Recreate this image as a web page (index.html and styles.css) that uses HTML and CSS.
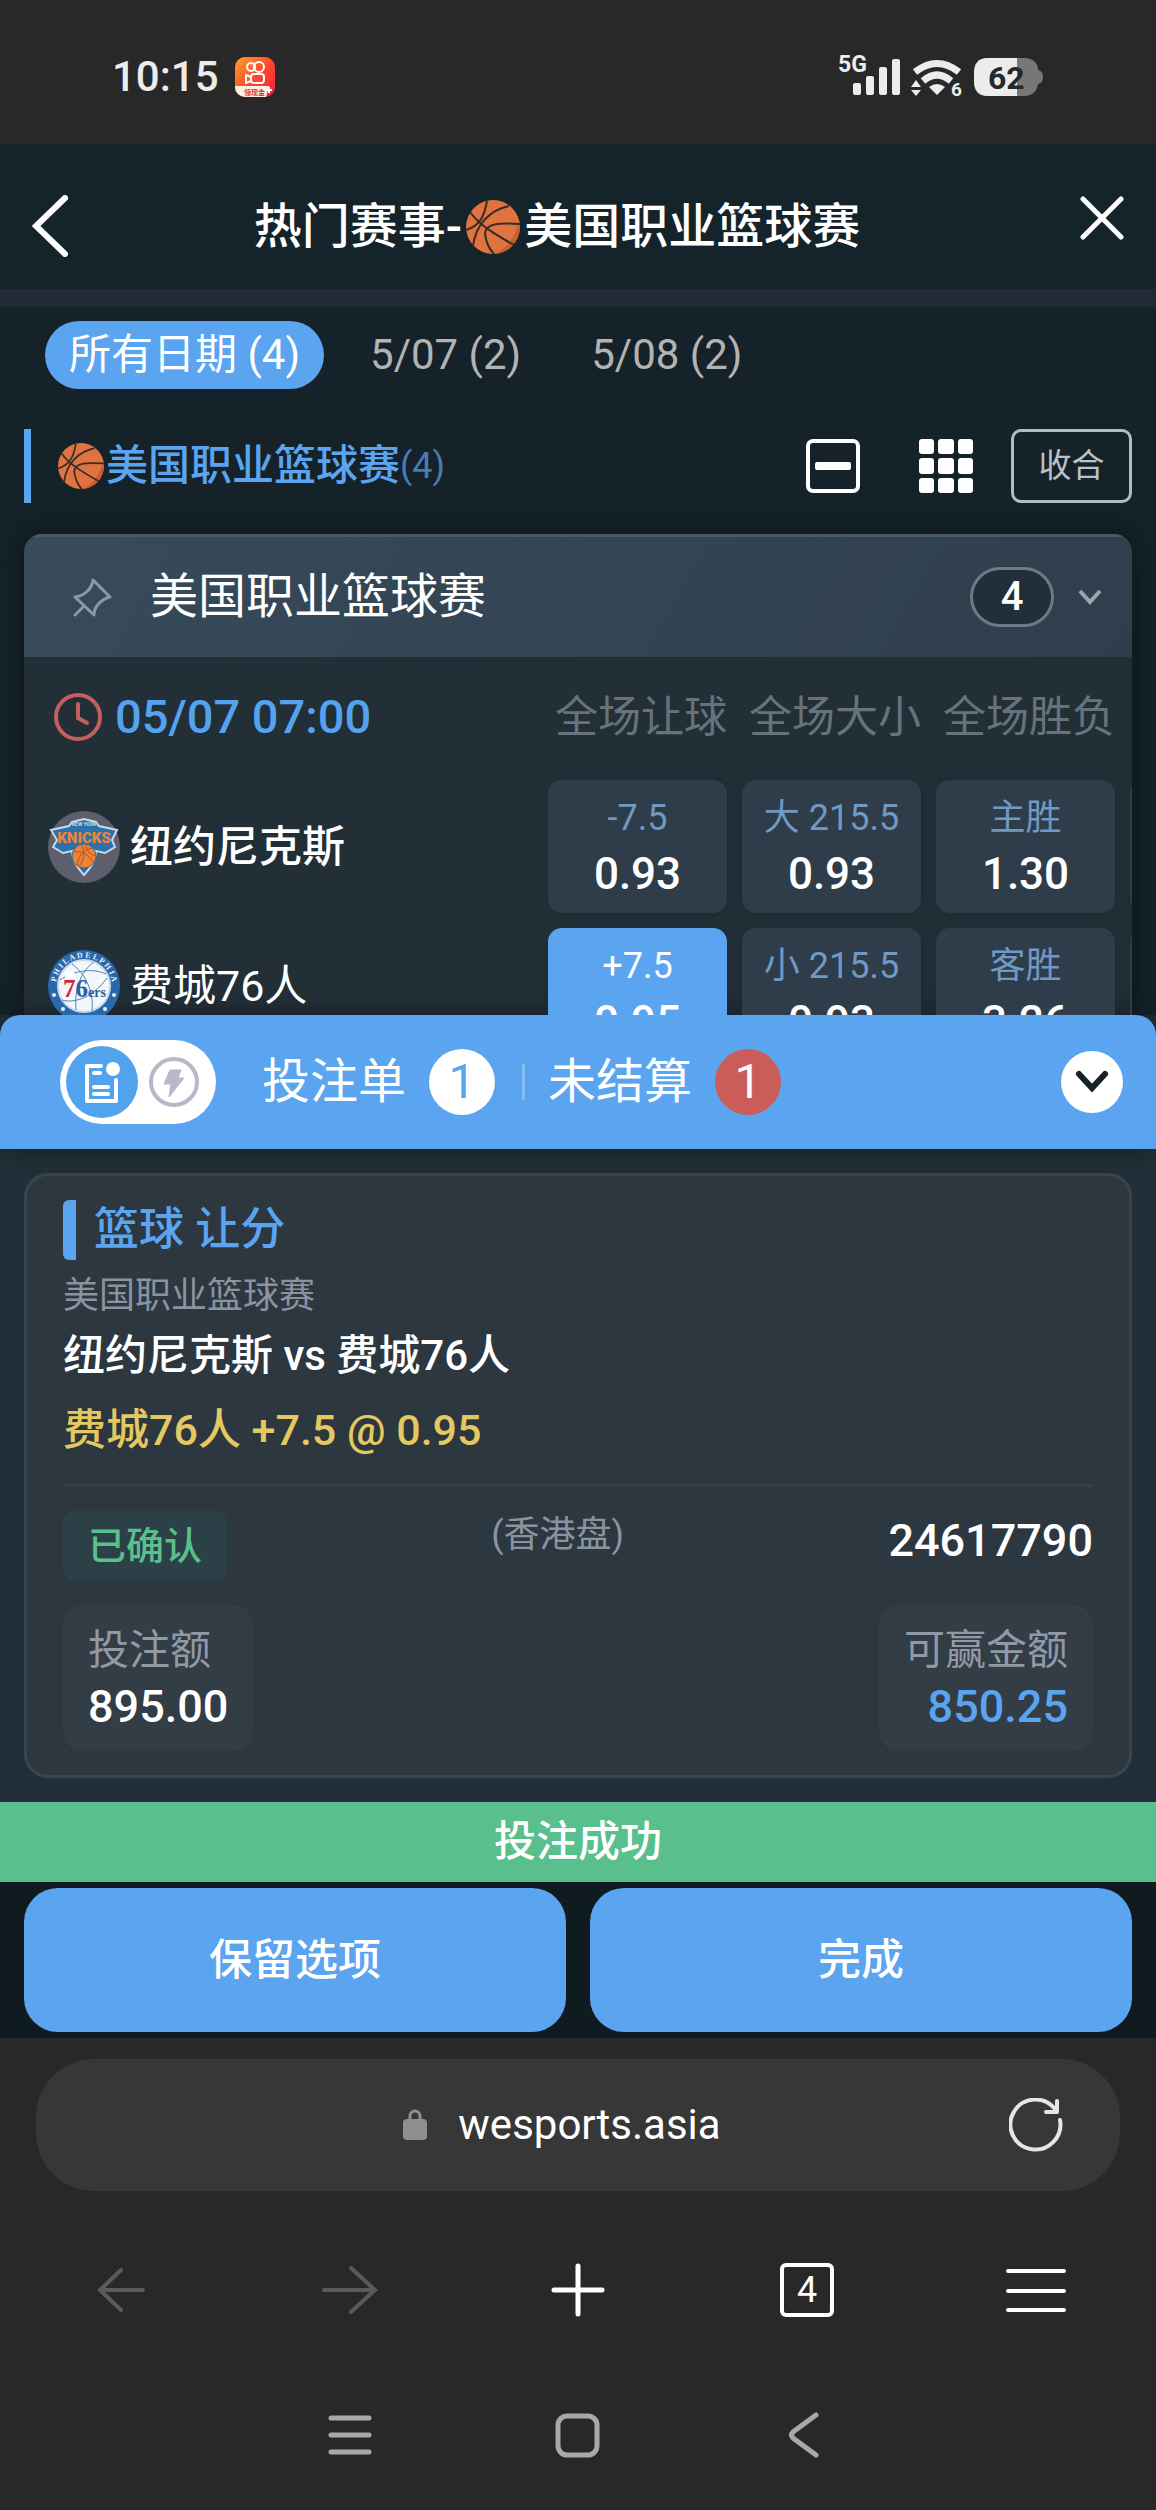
FILE: index.html
```html
<!DOCTYPE html>
<html lang="zh-CN">
<head>
<meta charset="utf-8">
<meta name="viewport" content="width=device-width, initial-scale=1">
<title>热门赛事 - 美国职业篮球赛</title>
<link rel="stylesheet" href="styles.css">
</head>
<body>
<svg class="defs" aria-hidden="true">
  <symbol id="ball" viewBox="0 0 54 54">
    <circle cx="27" cy="27" r="27" fill="#df7440"/>
    <path d="M53 20a27 27 0 0 1-25 34c12-5 22-16 25-34z" fill="#c95f2c"/>
    <g fill="none" stroke="#3b2a26" stroke-width="2">
      <path d="M4 12C14 26 32 36 48 45M0 30C13 26 18 18 21 1M7 46C10 24 24 10 43 6M54 24C36 23 19 22 19 34q2 13 9 20"/>
    </g>
  </symbol>
</svg>

<header class="status">
  <div class="status-left">
    <span class="clock">10:15</span>
    <svg width="40" height="40" viewBox="0 0 40 40" aria-hidden="true">
      <defs><linearGradient id="ks" x1="0" y1="0" x2="1" y2="1"><stop offset="0" stop-color="#fba62a"/><stop offset=".5" stop-color="#fb4a2c"/><stop offset="1" stop-color="#f5203f"/></linearGradient></defs>
      <rect width="40" height="40" rx="10" fill="url(#ks)"/>
      <path d="M0 29h34l-3 11H10A10 10 0 0 1 0 30z" fill="#fdf0e0"/>
      <g fill="none" stroke="#fff" stroke-width="2"><circle cx="16" cy="10" r="4"/><circle cx="24" cy="10" r="5"/><rect x="16" y="17" width="13" height="9" rx="3"/><path d="M16 20l-5-2v8l5-2"/></g>
      <text x="9" y="38" font-size="7" font-weight="700" fill="#d8333a">领现金</text>
      <path d="M34 30v6M31 33h6" stroke="#fff" stroke-width="2"/>
    </svg>
  </div>
  <svg class="signals" width="208" height="48" viewBox="0 0 208 48" aria-hidden="true">
    <text x="0" y="19" font-size="23" font-weight="700" fill="#ececec">5G</text>
    <g fill="#ececec"><rect x="15" y="30" width="8" height="12" rx="2"/><rect x="28" y="23" width="8" height="19" rx="2"/><rect x="41" y="14" width="8" height="28" rx="2"/><rect x="54" y="6" width="8" height="36" rx="2"/>
      <path d="M99 42l-8-8q8-6 16 0z"/><path d="M78 27l-5 7h10zM78 43l-5-6h10z"/></g>
    <g fill="none" stroke="#ececec" stroke-width="7"><path d="M77 19q22-17 44 0"/><path d="M85 28q14-12 28 0"/></g>
    <text x="113" y="43" font-size="19" font-weight="700" fill="#ececec">6</text>
    <path d="M150 5h36c10 0 14 6 14 12v13c0 7-5 13-14 13h-36c-10 0-14-6-14-15v-8c0-9 4-15 14-15z" fill="#777"/>
    <path d="M200 17q5 1 5 7t-5 7z" fill="#777"/>
    <path d="M150 5h29v38h-29c-10 0-14-6-14-15v-8c0-9 4-15 14-15z" fill="#ececec"/>
    <text x="150" y="36" font-size="32" font-weight="700" fill="#282828">62</text>
  </svg>
</header>

<div class="titlebar">
  <button class="icon-btn" aria-label="返回"><svg width="36" height="62" viewBox="0 0 36 62"><path d="M33 3L4 31l29 28" class="line w6"/></svg></button>
  <h1>热门赛事-<svg class="ball-lg" aria-hidden="true"><use href="#ball"/></svg>美国职业篮球赛</h1>
  <button class="icon-btn close" aria-label="关闭"><svg width="44" height="44" viewBox="0 0 44 44"><path d="M3 3l38 38M41 3L3 41" class="line w5"/></svg></button>
</div>

<main class="events">
  <nav class="tabs">
    <button class="tab on">所有日期 (4)</button>
    <button class="tab">5/07 (2)</button>
    <button class="tab">5/08 (2)</button>
  </nav>

  <div class="league">
    <h2><svg class="ball-md" aria-hidden="true"><use href="#ball"/></svg>美国职业篮球赛<span>(4)</span></h2>
    <button class="icon-btn" aria-label="精简"><svg width="54" height="54" viewBox="0 0 54 54"><rect x="2" y="2" width="50" height="50" rx="5" class="line w4"/><rect x="9" y="23" width="36" height="8" rx="2" fill="#fff"/></svg></button>
    <button class="icon-btn" aria-label="网格"><svg width="54" height="54" viewBox="0 0 54 54" fill="#fff"><rect width="15" height="15" rx="3"/><rect x="19" width="16" height="15" rx="3"/><rect x="39" width="15" height="15" rx="3"/><rect y="19" width="15" height="16" rx="3"/><rect x="19" y="19" width="16" height="16" rx="3"/><rect x="39" y="19" width="15" height="16" rx="3"/><rect y="39" width="15" height="15" rx="3"/><rect x="19" y="39" width="16" height="15" rx="3"/><rect x="39" y="39" width="15" height="15" rx="3"/></svg></button>
    <button class="fold">收合</button>
  </div>

  <section class="card">
    <header class="card-head">
      <svg width="40" height="40" viewBox="0 0 40 40" aria-hidden="true"><path d="M21 3L38 20C30 22 22 29 22 38L3 20C12 19 20 12 21 3zM11 30L3 38" fill="none" stroke="#8d989f" stroke-width="3" stroke-linejoin="round" stroke-linecap="round"/></svg>
      <h3>美国职业篮球赛</h3>
      <span class="count">4</span>
      <svg width="24" height="16" viewBox="0 0 24 16" aria-hidden="true"><path d="M2 2l10 11L22 2" fill="none" stroke="#9aa5ac" stroke-width="4"/></svg>
    </header>
    <div class="match">
      <div class="when">
        <svg width="48" height="48" viewBox="0 0 48 48" aria-hidden="true"><g fill="none" stroke="#c45f5d" stroke-width="4" stroke-linecap="round"><circle cx="24" cy="24" r="22"/><path d="M24 11v14l9 5"/></g></svg>
        <time>05/07 07:00</time>
      </div>
      <div class="market">全场让球</div><div class="market">全场大小</div><div class="market">全场胜负</div><i></i>

      <div class="teams">
        <div class="team strong">
          <svg width="72" height="72" viewBox="0 0 72 72" aria-hidden="true">
            <circle cx="36" cy="36" r="36" fill="#5d5f6c"/>
            <path d="M24 11l12-3 12 3 3 4 18 4-5 10 3 7-10 6-9-2c0 9-4 15-12 24-8-9-12-15-12-24l-9 2-10-6 4-7-6-10 18-4z" fill="#2d70aa" stroke="#c3dbe8" stroke-width="2"/>
            <text x="36" y="15" font-size="5" font-weight="700" fill="#c3dbe8" text-anchor="middle">NEW YORK</text>
            <text x="36" y="32" font-size="15" font-weight="900" fill="#ee8335" text-anchor="middle">KNICKS</text>
            <circle cx="36" cy="45" r="12" fill="#ee8335" stroke="#2d70aa" stroke-width="1"/>
            <path d="M25 41c9-2 16 3 21 11M33 33c5 8 3 18-3 23M45 37c-9 1-15 8-16 18M38 33c0 6 4 11 10 12" fill="none" stroke="#a9562a" stroke-width="1"/>
          </svg>
          <span>纽约尼克斯</span>
        </div>
        <div class="team">
          <svg width="72" height="72" viewBox="0 0 72 72" aria-hidden="true">
            <defs><path id="arc" d="M9 43A28 28 0 1 1 63 43"/></defs>
            <circle cx="36" cy="36" r="36" fill="#2a68ac"/><circle cx="36" cy="36" r="26" fill="#f4f7fa" stroke="#c6d9ea" stroke-width="2"/>
            <path d="M12 30c14-10 34-12 46-6M24 14c14 10 22 28 20 47M14 50c14 4 32-4 45-22M46 12c-12 8-20 26-18 48" fill="none" stroke="#4c82b8" stroke-width="1"/>
            <circle cx="22" cy="26" r="5" fill="#fff"/>
            <text x="15" y="47" font-family="Liberation Serif, serif" font-size="25" font-weight="700" fill="#d3243f">7<tspan fill="#2a5f9f">6</tspan><tspan fill="#2a5f9f" font-size="14">ers</tspan></text>
            <text font-family="Liberation Serif, serif" font-size="8" font-weight="700" fill="#e8f0f8" text-anchor="middle"><textPath href="#arc" startOffset="50%">P H I L A D E L P H I A</textPath></text>
            <g fill="#e8f0f8"><circle cx="6" cy="45" r="2"/><circle cx="66" cy="45" r="2"/><circle cx="15" cy="59" r="2"/><circle cx="57" cy="59" r="2"/></g>
          </svg>
          <span>费城76人</span>
        </div>
      </div>
      <button class="odd"><span>-7.5</span><b>0.93</b></button>
      <button class="odd"><span>大 215.5</span><b>0.93</b></button>
      <button class="odd"><span>主胜</span><b>1.30</b></button>
      <div class="odd"></div>

      <button class="odd picked"><span>+7.5</span><b>0.95</b></button>
      <button class="odd"><span>小 215.5</span><b>0.93</b></button>
      <button class="odd"><span>客胜</span><b>3.26</b></button>
      <div class="odd"></div>
    </div>
  </section>
</main>

<section class="slip">
  <header class="slip-bar">
    <button class="toggle" aria-label="切换投注模式">
      <svg width="156" height="84" viewBox="0 0 156 84">
        <rect width="156" height="84" rx="42" fill="#fff"/><circle cx="42" cy="42" r="36" fill="#51a3ee"/>
        <g fill="none" stroke="#fff" stroke-width="4" stroke-linecap="round" stroke-linejoin="round"><path d="M41 26H27v35h29V40M34 33h6M34 47h14M34 54h14"/></g>
        <circle cx="53" cy="29" r="7" fill="#fff"/>
        <circle cx="114" cy="42" r="23" fill="none" stroke="#b7b8c8" stroke-width="4"/>
        <path d="M110 30h11l-3 8h6l-15 19 2-13h-7z" fill="#b7b8c8" stroke="#b7b8c8" stroke-width="1" stroke-linejoin="round"/>
      </svg>
    </button>
    <button class="slip-tab">投注单<span class="pill white">1</span></button>
    <button class="slip-tab next">未结算<span class="pill red">1</span></button>
    <button class="down" aria-label="收起"><svg width="34" height="24" viewBox="0 0 34 24"><path d="M4 4l13 14L30 4" fill="none" stroke="#152229" stroke-width="6" stroke-linecap="round"/></svg></button>
  </header>

  <div class="slip-body">
    <article class="bet">
      <h3>篮球 让分</h3>
      <p class="muted">美国职业篮球赛</p>
      <p class="versus">纽约尼克斯 vs 费城76人</p>
      <p class="pick">费城76人 +7.5 @ 0.95</p>
      <div class="row info">
        <span class="ok">已确认</span>
        <span class="muted">(香港盘)</span>
        <span class="num">24617790</span>
      </div>
      <dl class="row">
        <div class="sum"><dt>投注额</dt><dd>895.00</dd></div>
        <div class="sum win"><dt>可赢金额</dt><dd>850.25</dd></div>
      </dl>
    </article>
  </div>
  <p class="success" role="status">投注成功</p>
  <div class="actions">
    <button>保留选项</button>
    <button>完成</button>
  </div>
</section>

<footer class="browser">
  <div class="url">
    <svg width="26" height="32" viewBox="0 0 26 32" aria-hidden="true"><rect x="1" y="10" width="24" height="21" rx="4" fill="#8f8f8f"/><path d="M8 11V7a5 5 0 0 1 10 0v4" fill="none" stroke="#8f8f8f" stroke-width="3"/></svg>
    <a href="#">wesports.asia</a>
    <button class="icon-btn reload" aria-label="刷新"><svg width="54" height="54" viewBox="0 0 54 54"><path d="M51 22A25 25 0 1 1 46 11M48 3v11H37" fill="none" stroke="#e6e6e6" stroke-width="4" stroke-linecap="round" stroke-linejoin="round"/></svg></button>
  </div>
  <nav class="tools">
    <button class="icon-btn" aria-label="后退"><svg width="60" height="60" viewBox="0 0 60 60"><path d="M53 30H11M31 10L10 30l21 20" fill="none" stroke="#5a5a5a" stroke-width="4" stroke-linecap="round"/></svg></button>
    <button class="icon-btn" aria-label="前进"><svg width="60" height="60" viewBox="0 0 60 60"><path d="M5 30h50M32 8l24 22-24 22" fill="none" stroke="#5a5a5a" stroke-width="4" stroke-linecap="round"/></svg></button>
    <button class="icon-btn" aria-label="新建"><svg width="60" height="60" viewBox="0 0 60 60"><path d="M30 6v48M6 30h48" class="line w5"/></svg></button>
    <button class="icon-btn" aria-label="标签页"><span class="tabs-count">4</span></button>
    <button class="icon-btn" aria-label="菜单"><svg width="60" height="60" viewBox="0 0 60 60"><path d="M2 11h56M2 31h56M2 50h56" class="line w4"/></svg></button>
  </nav>
  <nav class="system">
    <button class="icon-btn" aria-label="最近任务"><svg width="60" height="60" viewBox="0 0 60 60"><path d="M11 13h38M11 30h38M11 47h38" class="sys"/></svg></button>
    <button class="icon-btn" aria-label="主页"><svg width="60" height="60" viewBox="0 0 60 60"><rect x="10" y="11" width="39" height="39" rx="9" class="sys"/></svg></button>
    <button class="icon-btn" aria-label="系统返回"><svg width="60" height="60" viewBox="0 0 60 60"><path d="M40 10L17 27q-3 3 0 6l23 17" class="sys"/></svg></button>
  </nav>
</footer>
</body>
</html>
```
FILE: styles.css
```css
* { box-sizing: border-box; margin: 0; padding: 0; }

body {
  font-family: Roboto, "Noto Sans CJK SC", sans-serif;
  font-size: 42px;
  line-height: 60px;
  background: #282828;
  color: #fff;
}

svg { display: block; flex: none; }
.defs { position: absolute; width: 0; height: 0; }
button { font: inherit; color: inherit; background: none; border: 0; cursor: pointer; }
h1, h2, h3 { font-weight: 500; }
.icon-btn { display: flex; align-items: center; justify-content: center; flex: none; }
.line { fill: none; stroke: #fff; stroke-linecap: round; }
.w4 { stroke-width: 4; }
.w5 { stroke-width: 5; }
.w6 { stroke-width: 6; }
.sys { fill: none; stroke: #a8a8a8; stroke-width: 5; stroke-linecap: round; }

/* phone status bar */
.status {
  display: flex; justify-content: space-between; align-items: center;
  height: 144px; padding: 10px 110px 0 112px; color: #ececec;
}
.status-left { display: flex; align-items: center; gap: 16px; }
.clock { font-size: 42px; font-weight: 500; line-height: 48px; }
.signals { overflow: visible; }

/* page title */
.titlebar {
  display: flex; align-items: center;
  height: 163px; padding: 18px 32px 0; background: #15232a; border-bottom: 18px solid #202b37;
}
.titlebar h1 { display: flex; flex: 1; align-items: center; justify-content: center; padding: 2px 34px 0 0; font-size: 48px; }
.ball-lg { width: 54px; height: 54px; margin: 0 4px; }
.close { padding-bottom: 16px; }

/* event list */
.events { height: 708px; overflow: hidden; background: #152229; padding: 14px 24px 0; }
.tabs { display: flex; gap: 22px; padding-left: 21px; }
.tab { height: 68px; padding: 0 24px; border-radius: 34px; color: #b3b3b3; line-height: 68px; }
.tab.on { background: #5aa4f0; color: #fff; }
.league { display: flex; align-items: center; margin-top: 40px; height: 74px; }
.league h2 {
  display: flex; align-items: center; flex: 1; height: 74px; padding-left: 27px;
  border-left: 7px solid #5aa4f0; font-size: 42px; color: #5aa4f0;
}
.league h2 span { font-size: 36px; font-weight: 400; color: #447eb5; }
.ball-md { width: 46px; height: 46px; margin-right: 2px; }
.league .icon-btn { margin-right: 59px; }
.league .icon-btn + .icon-btn { margin-right: 38px; }
.fold { width: 121px; height: 74px; border: 3px solid #aebdc6; border-radius: 10px; font-size: 33px; color: #b9c3c8; }

.card { margin-top: 31px; border-radius: 18px 18px 0 0; background: #232f37; overflow: hidden; box-shadow: 0 0 24px #0c1419; }
.card-head {
  display: flex; align-items: center; height: 123px; padding: 0 30px 0 48px;
  background: linear-gradient(120deg, #374b5a, #2f3e4c); border-top: 3px solid #495a66;
}
.card-head h3 { flex: 1; padding-left: 38px; font-size: 48px; font-weight: 400; }
.count {
  width: 84px; height: 60px; margin-right: 24px; border: 3px solid #6d7983; border-radius: 30px;
  background: #232f38; font-size: 40px; font-weight: 500; line-height: 54px; text-align: center;
}
.match {
  display: grid; grid-template-columns: 1fr 179px 179px 179px 179px; gap: 15px;
  grid-template-rows: 108px 133px 133px; margin-right: -177px; padding-left: 24px;
}
.when { display: flex; align-items: center; gap: 13px; padding: 12px 0 0 6px; color: #55a2ef; font-size: 47px; font-weight: 500; }
.market { padding-top: 12px; font-size: 43px; line-height: 96px; text-align: right; color: #67737b; white-space: nowrap; }
.teams { grid-row: 2 / 4; padding-top: 31px; }
.team { display: flex; align-items: center; gap: 10px; margin-bottom: 67px; font-size: 43px; }
.strong { font-weight: 500; }
.odd {
  display: flex; flex-direction: column; align-items: center; border-radius: 14px; padding-top: 14px;
  background: #2f3d4a; box-shadow: 0 0 6px #1e2a31;
}
.odd span { font-size: 36px; line-height: 48px; color: #7099c4; }
.odd b { font-size: 44px; font-weight: 500; line-height: 64px; }
.odd.picked { background: #5aa4f0; }
.odd.picked span { color: #fff; }

/* bet slip */
.slip { background: #232f38; }
.slip-bar {
  display: flex; align-items: center; height: 134px; padding: 0 33px 0 60px;
  background: #5aa4f0; border-radius: 20px 20px 0 0; box-shadow: 0 0 24px #141e25;
}
.slip-tab { display: flex; align-items: center; gap: 23px; margin-left: 46px; font-size: 48px; }
.next { margin-left: 27px; }
.next::before { content: ""; width: 3px; height: 36px; background: #85bcf4; }
.pill { width: 66px; height: 66px; border-radius: 50%; line-height: 66px; text-align: center; }
.white { background: #fff; color: #5aa4f0; }
.red { background: #ca5d59; }
.down { display: flex; align-items: center; justify-content: center; width: 62px; height: 62px; margin-left: auto; border-radius: 50%; background: #fff; }
.slip-body { padding: 24px; }
.bet { padding: 24px 36px; border: 3px solid #38454e; border-radius: 24px; background: #2c3740; }
.bet h3 { padding-left: 18px; border-left: 13px solid #5aa4f0; border-radius: 6px 0 0 6px; font-size: 45px; color: #5aa4f0; }
.muted { font-size: 36px; color: #8b93a0; }
p.muted { margin-top: 12px; line-height: 48px; }
.versus { margin-top: 6px; font-weight: 500; }
.pick { margin-top: 14px; padding-bottom: 24px; border-bottom: 3px solid #35414b; font-size: 43px; font-weight: 500; color: #e3c95f; }
.row { display: flex; justify-content: space-between; margin-top: 24px; }
.info { height: 70px; }
.ok { padding: 0 25px; border-radius: 12px; background: #2c4147; font-size: 38px; font-weight: 500; line-height: 70px; color: #59c08d; }
.info .muted { line-height: 48px; }
.num { font-size: 45px; font-weight: 500; }
.sum { height: 146px; padding: 15px 25px; border-radius: 20px; background: #323d46; }
.sum dt { font-size: 41px; color: #9299a6; }
.sum dd { font-size: 45px; font-weight: 500; line-height: 54px; }
.win { text-align: right; }
.win dd { color: #5aa4f0; }
.success { background: #59c08d; font-weight: 500; line-height: 80px; text-align: center; }
.actions { display: flex; gap: 24px; padding: 6px 24px; background: #101b20; }
.actions button { flex: 1; height: 144px; border-radius: 34px; background: #5aa4f0; font-size: 43px; font-weight: 500; }

/* browser chrome */
.browser { padding: 21px 36px 0; }
.url { display: grid; grid-template-columns: 1fr auto 1fr; align-items: center; column-gap: 30px; height: 132px; padding: 0 57px 0 80px; border-radius: 58px; background: #373737; }
.url > svg { justify-self: end; }
.url a { color: #fff; text-decoration: none; }
.reload { justify-self: end; }
.tools { display: flex; justify-content: space-between; align-items: center; margin-top: 69px; padding: 0 54px; }
.tabs-count { width: 54px; height: 54px; margin: 3px; border: 4px solid #fff; border-radius: 6px; font-size: 36px; line-height: 46px; text-align: center; }
.system { display: flex; justify-content: center; gap: 168px; margin-top: 85px; padding-bottom: 45px; }
```
